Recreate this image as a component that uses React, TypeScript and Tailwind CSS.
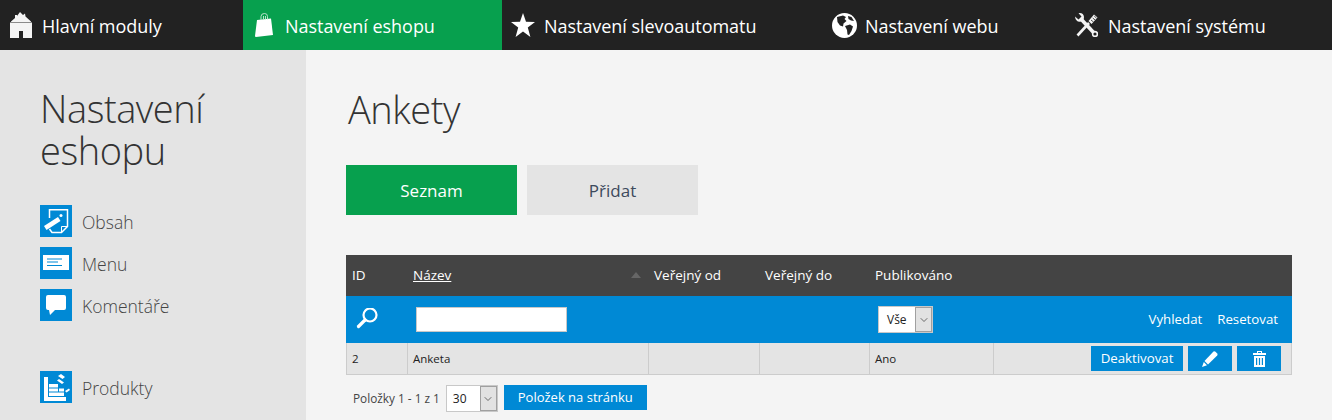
import React from "react";
import { ChevronDown } from "lucide-react";

function House() {
  return (
    <svg width="22" height="26" viewBox="0 0 22 26" fill="#f4f4f4">
      <path d="M10 0 L13 3 L15 1.5 L15.5 4.5 L21 9.5 V10 H1 V9.5 L5 6 V3 H7 V4 Z" />
      <path d="M0 10.5 H22 V26 H13 V19 H9 V26 H0 Z" />
    </svg>
  );
}
function Bag() {
  return (
    <svg width="18" height="24" viewBox="0 0 18 24" fill="#fff">
      <path d="M2 7 L16 5.5 L18 22 L1 24 Q0 24 0 23 Z" />
      <path d="M6 7 V3.5 Q6 .5 9.5 .5 Q12.5 .5 12.5 3.5 V6.5 M8.5 6.5 V3 M10.5 6.5 V3" fill="none" stroke="#b8e2c9" strokeWidth="1" />
    </svg>
  );
}
function StarIcon() {
  return (
    <svg width="24" height="24" viewBox="0 0 24 24" fill="#fff">
      <path d="M12 0 L15 8.8 L24 9 L16.8 14.6 L19.4 24 L12 18.4 L4.6 24 L7.2 14.6 L0 9 L9 8.8 Z" />
    </svg>
  );
}
function Globe() {
  return (
    <svg width="25" height="25" viewBox="0 0 25 25">
      <circle cx="12.5" cy="12.5" r="12.5" fill="#fff" />
      <path d="M5 4 L11 2.5 L14 4 L12.5 6 L14.5 8 L11.5 10.5 L11 13.5 L8 12.5 L5.5 9 Z" fill="#222" />
      <path d="M13 13 L18 11.5 L21 13.5 L19.5 18 L17 22 L15.5 21.5 L15 17 Z" fill="#222" />
      <path d="M16 3 L19.5 4 L22 8 L19 7.5 L16.5 6 Z" fill="#222" />
    </svg>
  );
}
function Tools() {
  return (
    <svg width="23" height="24" viewBox="0 0 23 24" fill="none" stroke="#f4f4f4">
      <path d="M5.5 5.5 L19.5 20.5" strokeWidth="3.6" />
      <path d="M0 3.5 L3.5 6.5 L6.5 3.5 L3.5 .2 Q8.5 -.5 9 4 Q9 9 4 8.8 Q.5 8 0 3.5 Z" fill="#f4f4f4" stroke="none" />
      <circle cx="20" cy="21" r="2.4" strokeWidth="1.6" fill="#222" />
      <path d="M14 10 L2.5 22.5" strokeWidth="2.6" />
      <path d="M13.5 8 L19 1.5 L22.5 4.5 L16.5 11 Z" fill="#f4f4f4" stroke="none" />
      <path d="M16 7 L18.5 9 M17.7 5 L20.2 7 M19.3 3.2 L21.5 5" stroke="#222" strokeWidth="0.8" />
    </svg>
  );
}

function NavItem({ icon, label, w, active, pl }: { icon: React.ReactNode; label: string; w: string; active?: boolean; pl: string }) {
  return (
    <div className={`flex h-[50px] items-center ${w} ${pl} ${active ? "bg-[#07a04e]" : ""}`}>
      {icon}
      <span className="pt-[2px] text-[18px] tracking-[-0.04px] text-white">{label}</span>
    </div>
  );
}

function SideItem({ icon, label, cls }: { icon: React.ReactNode; label: string; cls?: string }) {
  return (
    <div className={`flex h-8 items-center gap-[10px] ${cls ?? ""}`}>
      <div className="h-8 w-8 bg-[#0089d5]">{icon}</div>
      <span className="pt-[2px] text-[17.5px] font-light text-[#444]">{label}</span>
    </div>
  );
}

function SelectBox({ value, w, valueCls }: { value: string; w: string; valueCls: string }) {
  return (
    <div className={`flex h-[27px] ${w} items-stretch border border-[#c8c8c8] bg-white`}>
      <div className={`flex flex-1 items-center text-[12px] text-[#222] ${valueCls}`}>{value}</div>
      <div className="flex w-[17px] items-center justify-center border border-[#a0a0a0] bg-[#e2e2e2]">
        <ChevronDown size={12} strokeWidth={1.25} color="#222" />
      </div>
    </div>
  );
}

export default function App() {
  return (
    <div className="flex h-[420px] w-[1332px] flex-col overflow-hidden bg-[#f4f4f4]" style={{ fontFamily: '"Open Sans", "Noto Sans", sans-serif' }}>
      <header className="flex h-[50px] shrink-0 bg-[#222222]">
        <NavItem w="w-[243px]" pl="pl-[10px]" icon={<span className="mr-[10px] flex"><House /></span>} label="Hlavní moduly" />
        <NavItem w="w-[259px]" pl="pl-[12px]" active icon={<span className="mr-[12px] flex"><Bag /></span>} label="Nastavení eshopu" />
        <NavItem w="w-[319px]" pl="pl-[9px]" icon={<span className="mr-[9px] flex"><StarIcon /></span>} label="Nastavení slevoautomatu" />
        <NavItem w="w-[243px]" pl="pl-[11px]" icon={<span className="mr-[8px] flex"><Globe /></span>} label="Nastavení webu" />
        <NavItem w="w-[268px]" pl="pl-[11px]" icon={<span className="mr-[10px] flex"><Tools /></span>} label="Nastavení systému" />
      </header>
      <div className="flex min-h-0 flex-1">
        <aside className="w-[306px] shrink-0 bg-[#e4e4e4] pl-10 pt-[37px]">
          <h2 className="text-[38px] font-light leading-[42px] tracking-[-0.45px] text-[#333]">
            Nastavení
            <br />
            eshopu
          </h2>
          <div className="mt-[34px] flex flex-col gap-[10px]">
            <SideItem
              label="Obsah"
              icon={
                <svg width="32" height="32" viewBox="0 0 32 32" fill="none" stroke="#fff" strokeWidth="1.5">
                  <path d="M9.5 13 V4.7 H27.5 V21.5 L21.5 27.5 H12 L9.5 24" />
                  <path d="M21.5 27 V21.5 H27" strokeWidth="1" />
                  <path d="M4 21 L18 12 L20.5 16 L6.5 25 Z" fill="#fff" stroke="none" />
                  <circle cx="21" cy="10.5" r="1.5" fill="#fff" stroke="none" />
                </svg>
              }
            />
            <SideItem
              label="Menu"
              icon={
                <svg width="32" height="32" viewBox="0 0 32 32">
                  <rect x="3" y="8" width="26" height="15" fill="#fff" />
                  <path d="M7 12 H22 M7 15 H18 M7 18.5 H22" stroke="#0089d5" strokeWidth="1.2" />
                </svg>
              }
            />
            <SideItem
              label="Komentáře"
              icon={
                <svg width="32" height="32" viewBox="0 0 32 32" fill="#fff">
                  <path d="M8 6 H24 Q26 6 26 8 V19 Q26 21 24 21 H15 L10 26 L9 21 H8 Q6 21 6 19 V8 Q6 6 8 6 Z" />
                </svg>
              }
            />
            <SideItem
              cls="mt-[40px]"
              label="Produkty"
              icon={
                <svg width="32" height="32" viewBox="0 0 32 32" fill="#fff">
                  <path d="M4 6 H8 V26 H26 V30 H4 Z" />
                  <path d="M9 13 H18 V16.5 H9 Z M9 17.5 H18 V20.5 H9 Z M19 17.5 H24 V20.5 H19 Z M9 21.5 H24 V25 H9 Z" />
                  <path d="M18 5 L21 3 L25 6 L22.5 8 Z M17 9.5 L19 8 L24 11.5 L22 13 Z M25 20 L29 17.5 L30 19 L26.5 21.5 Z" />
                </svg>
              }
            />
          </div>
        </aside>
        <main className="min-w-0 flex-1 pl-10 pt-[34px]">
          <h1 className="pl-[2px] text-[38px] font-light leading-[50px] tracking-[-0.45px] text-[#333]">Ankety</h1>
          <div className="mt-[31px] flex gap-[10px]">
            <div className="flex h-[50px] w-[171px] items-center justify-center bg-[#07a04e] pt-px text-[17px] text-white">Seznam</div>
            <div className="flex h-[50px] w-[171px] items-center justify-center bg-[#e4e4e4] pt-px text-[17px] text-[#3d4a5c]">Přidat</div>
          </div>
          <div className="mt-10 w-[946px] text-[13.5px]">
            <div className="grid h-[41px] grid-cols-[67px_241px_111px_110px_124px_293px] items-center bg-[#444444] text-white">
              <div className="pl-[6px]">ID</div>
              <div className="relative">
                <span className="underline">Název</span>
                <span className="absolute right-[13px] top-[7px] h-0 w-0 border-x-[5px] border-b-[6px] border-x-transparent border-b-[#666]" />
              </div>
              <div>Veřejný od</div>
              <div>Veřejný do</div>
              <div>Publikováno</div>
              <div />
            </div>
            <div className="grid h-[47px] grid-cols-[70px_462px_414px] items-center bg-[#0089d5]">
              <div className="pl-[9px]">
                <svg width="24" height="24" viewBox="0 0 24 24" fill="none" stroke="#fff">
                  <circle cx="15" cy="7" r="6.5" strokeWidth="2.2" />
                  <path d="M10 12 L3.5 18.5" strokeWidth="3.2" strokeLinecap="round" />
                </svg>
              </div>
              <div>
                <div className="h-[25px] w-[151px] border border-[#c8c8c8] bg-white" />
              </div>
              <div className="flex items-center justify-between pr-[14px]">
                <SelectBox value="Vše" w="w-[55px]" valueCls="pl-2" />
                <div className="flex gap-[15px] text-[13.25px] text-white">
                  <span>Vyhledat</span>
                  <span>Resetovat</span>
                </div>
              </div>
            </div>
            <div className="grid h-[32px] grid-cols-[61px_241px_111px_110px_124px_1fr] border-x border-b border-[#cccccc] bg-[#e4e4e4] text-[11.5px] text-[#222] [&>*]:border-r [&>*]:border-[#cccccc] [&>*]:pl-[5px]">
              <div className="flex items-center">2</div>
              <div className="flex items-center">Anketa</div>
              <div />
              <div />
              <div className="flex items-center">Ano</div>
              <div className="flex items-center justify-end gap-[5px] !border-r-0 pr-[10px]">
                <button className="flex h-[25px] w-[92px] items-center justify-center bg-[#0089d5] text-[13.25px] text-white">Deaktivovat</button>
                <button className="flex h-[25px] w-11 items-center justify-center bg-[#0089d5]">
                  <svg width="16" height="16" viewBox="0 0 16 16" fill="#fff">
                    <path d="M11.5 .5 Q12.5 0 13.5 .8 L15.2 2.5 Q16 3.5 15.2 4.5 L6 13.5 L2.5 10 Z" />
                    <path d="M1.8 11 L5 14.2 L0 16 Z" />
                  </svg>
                </button>
                <button className="flex h-[25px] w-11 items-center justify-center bg-[#0089d5]">
                  <svg width="13" height="16" viewBox="0 0 13 16" fill="#fff">
                    <path d="M4 2 V0 H9 V2 H13 V4 H0 V2 Z M5 1 V2 H8 V1 Z" fillRule="evenodd" />
                    <path d="M1 5 H12 V16 H1 Z M3 7 V14 H4.2 V7 Z M5.9 7 V14 H7.1 V7 Z M8.8 7 V14 H10 V7 Z" fillRule="evenodd" />
                  </svg>
                </button>
              </div>
            </div>
            <div className="mt-[10px] flex items-start text-[11.8px] text-[#444]">
              <span className="pl-[7px] leading-[27px]">Položky 1 - 1 z 1</span>
              <div className="ml-[6px]"><SelectBox value="30" w="w-[52px]" valueCls="pl-[6px]" /></div>
              <button className="ml-[6px] flex h-[25px] w-[143px] items-center justify-center bg-[#0089d5] text-[13px] text-white">Položek na stránku</button>
            </div>
          </div>
        </main>
      </div>
    </div>
  );
}
